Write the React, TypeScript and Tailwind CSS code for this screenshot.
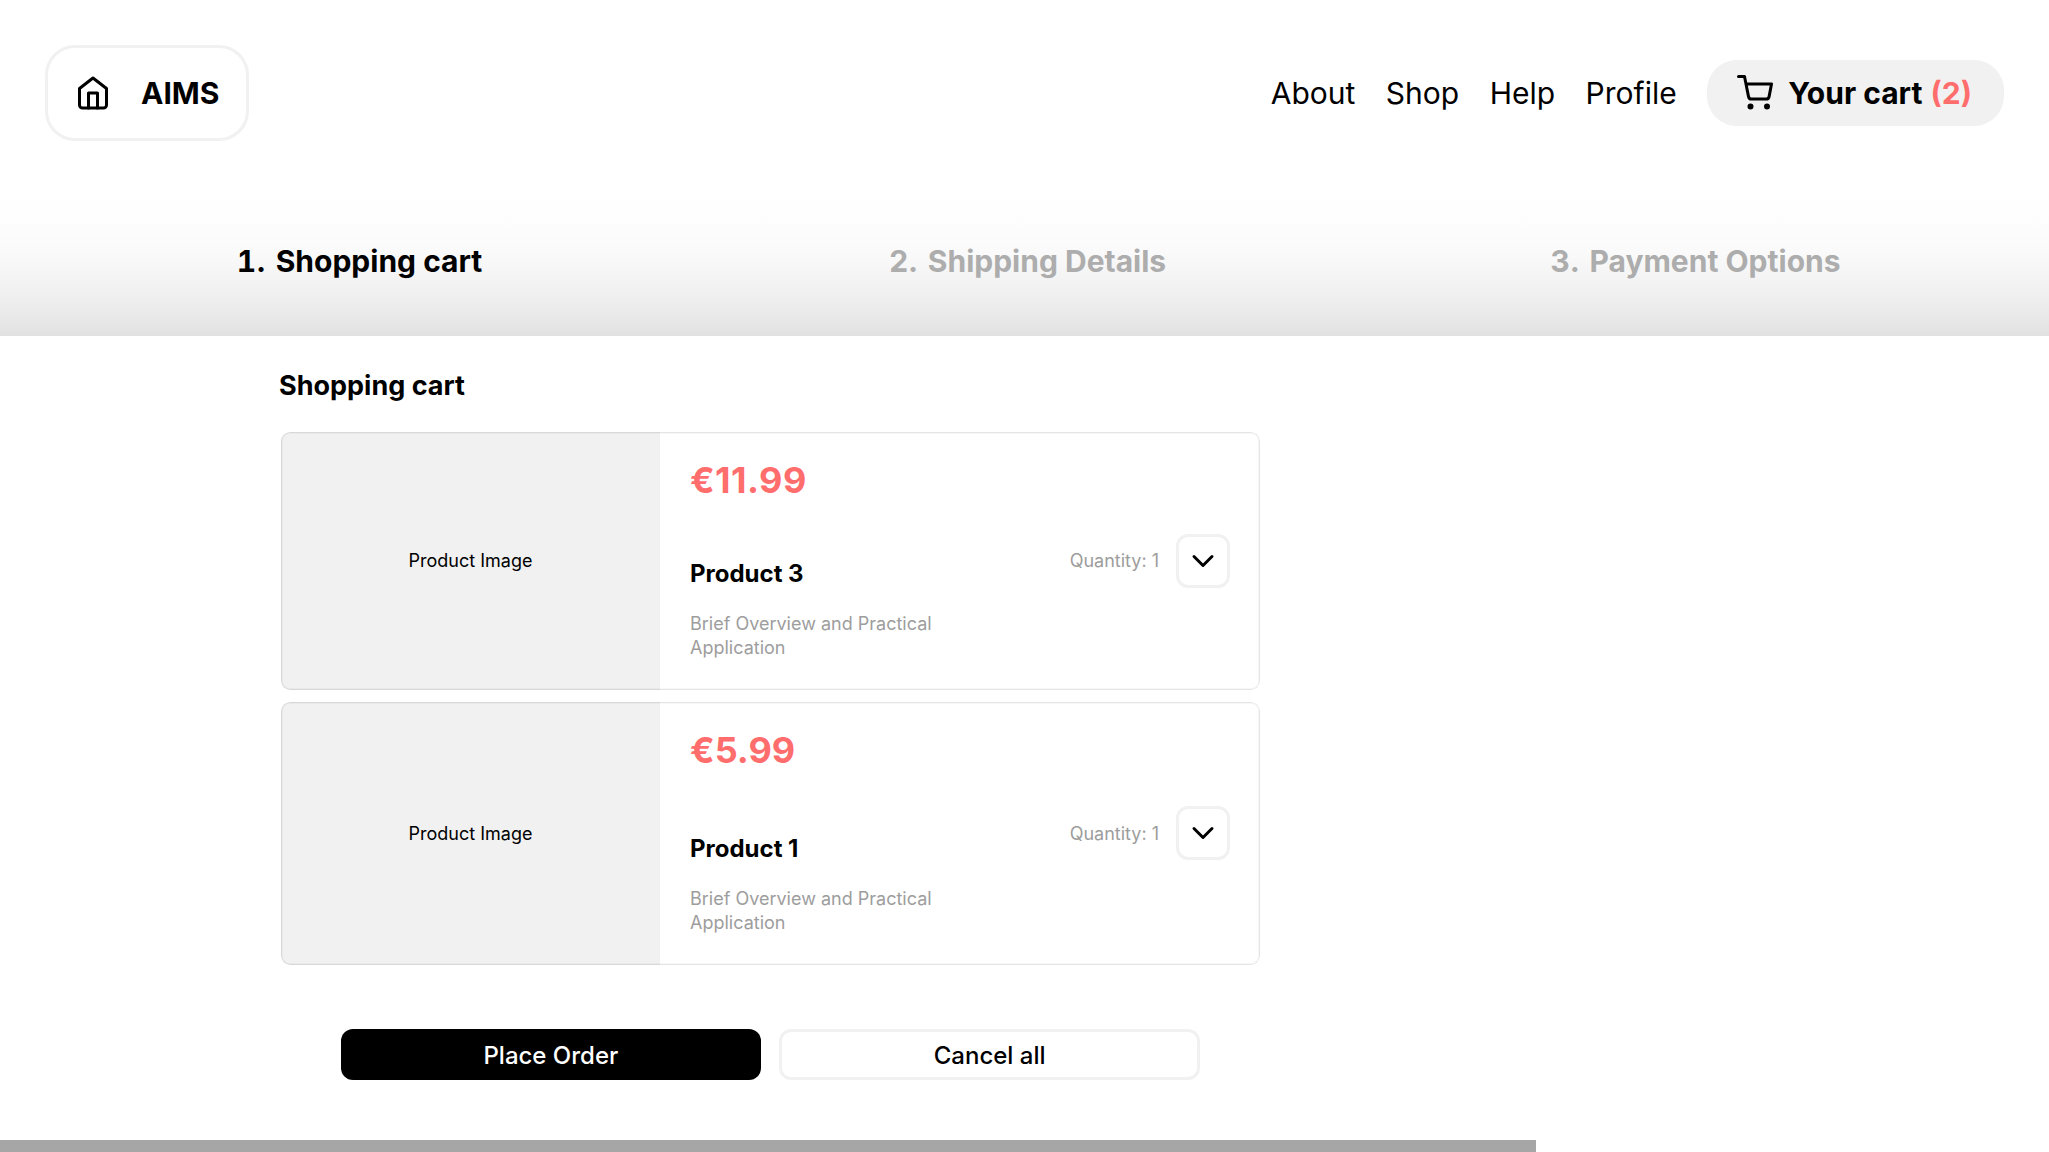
import { FiChevronDown, FiHome, FiShoppingCart } from "react-icons/fi";

const links = ["About", "Shop", "Help", "Profile"];

const steps = ["Shopping cart", "Shipping Details", "Payment Options"];

const items = [
  { name: "Product 3", price: "€11.99", size: "h-[258px]", tracking: "tracking-[0.45px]", inset: "" },
  { name: "Product 1", price: "€5.99", size: "h-[262.5px]", tracking: "", inset: "pt-px" },
];

function Header() {
  return (
    <header className="flex h-[186px] items-center justify-between px-[45px]">
      <a className="flex h-24 items-center gap-[30px] rounded-[30px] border-[3px] border-[#f1f1f1] px-[27px] text-[30px] font-bold">
        <FiHome size={36} />
        AIMS
      </a>
      <nav className="flex items-center gap-[30.5px] text-[30px]">
        {links.map((link) => (
          <a key={link}>{link}</a>
        ))}
        <a className="flex h-[66px] items-center gap-[15px] rounded-[30px] bg-[#f1f1f1] pr-[32px] pl-[30px] font-bold">
          <FiShoppingCart size={36} />
          <span>
            Your cart <span className="ml-px text-[#ff6d6d]">(2)</span>
          </span>
        </a>
      </nav>
    </header>
  );
}

function Steps() {
  return (
    <ol className="grid h-[150px] grid-cols-3 items-center bg-[linear-gradient(to_bottom,#fff_0%,#fefefe_18%,#fcfcfc_32%,#fafafa_44%,#f4f4f4_61%,#f0f0f0_72%,#e9e9e9_87%,#e1e1e1_100%)] pl-[45px] text-[30px] font-bold">
      {steps.map((step, index) => (
        <li
          key={step}
          className={
            index === 0 ? "relative justify-self-center text-black" : "relative justify-self-center text-[#adadad]"
          }
        >
          <span className="absolute right-full mr-2.5 tracking-[0.75px] tabular-nums">{index + 1}.</span>
          {step}
        </li>
      ))}
    </ol>
  );
}

function CartItem({ name, price, size, tracking, inset }: (typeof items)[number]) {
  return (
    <article className={`relative flex overflow-hidden rounded-[9px] ${size}`}>
      <div className={`flex w-[379px] items-center justify-center bg-[#f1f1f1] text-lg ${inset}`}>Product Image</div>
      <div className="flex flex-1 items-center justify-between p-[30px]">
        <div className="flex w-[260px] flex-col justify-between self-stretch">
          <p className={`text-[36px] leading-[37px] font-bold text-[#ff6d6d] ${tracking}`}>{price}</p>
          <div>
            <h3 className="mb-5 text-2xl leading-9 font-bold">{name}</h3>
            <p className="text-lg leading-6 text-[#9d9d9d]">Brief Overview and Practical Application</p>
          </div>
        </div>
        <div className="flex items-center gap-[17px]">
          <span className={`text-lg text-[#9d9d9d] ${inset}`}>Quantity: 1</span>
          <button className="flex size-[54px] items-center justify-center rounded-xl border-[3px] border-[#f1f1f1]">
            <FiChevronDown size={36} />
          </button>
        </div>
      </div>
      <div className="pointer-events-none absolute inset-0 rounded-[9px] border border-black/10 shadow-[inset_0_0_0_1px_rgba(0,0,0,0.03)]" />
    </article>
  );
}

export default function App() {
  return (
    <div className="flex h-[1152px] flex-col bg-white font-['Inter',sans-serif] text-black">
      <Header />
      <Steps />
      <main className="ml-[281px] w-[979px] flex-1 pt-[31px]">
        <h2 className="-ml-0.5 mb-7 text-[27px] leading-[37px] font-bold">Shopping cart</h2>
        <div className="flex flex-col gap-3">
          {items.map((item) => (
            <CartItem key={item.name} {...item} />
          ))}
        </div>
        <div className="mt-[64.5px] mr-[60px] ml-[59.5px] grid h-[51px] grid-cols-2 gap-[18px] text-2xl font-medium">
          <button className="rounded-xl bg-black pt-0.5 text-white">Place Order</button>
          <button className="rounded-xl border-[3px] border-[#f1f1f1] pt-0.5">Cancel all</button>
        </div>
      </main>
      <div className="h-3 w-[1536px] bg-[#a6a6a6]" />
    </div>
  );
}
